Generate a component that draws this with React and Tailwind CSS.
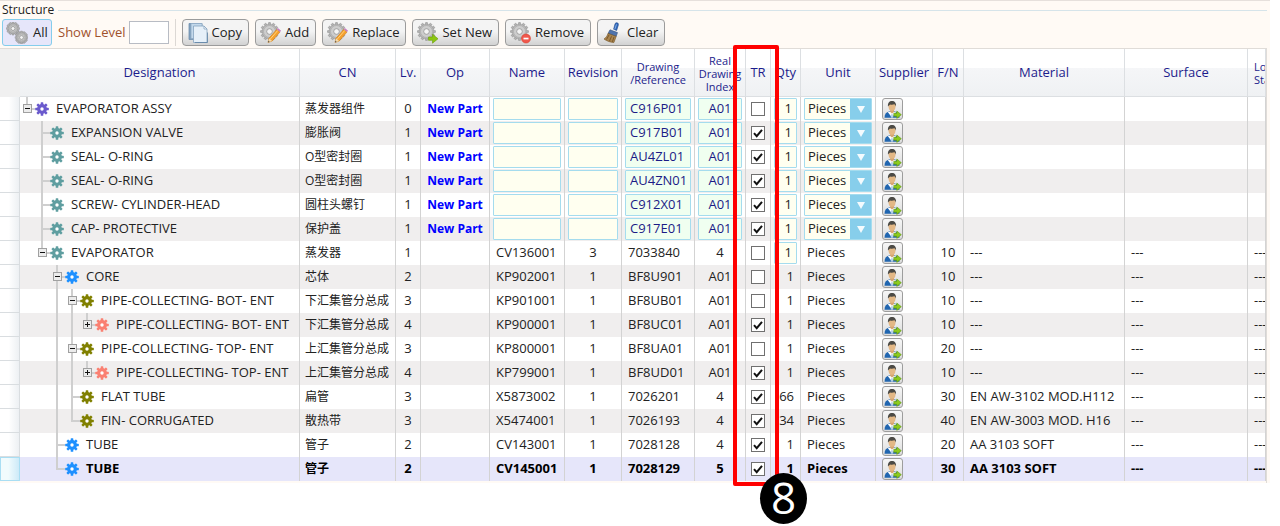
import React from "react";

const GEAR_COLORS = {
  purple: "#6a5acd",
  teal: "#5f9ea0",
  blue: "#1e90ff",
  olive: "#808000",
  salmon: "#fa8072",
};

// guides: one character per tree slot
//   " " empty, "|" line passes through, "T" branch with next sibling, "L" last branch
const ROWS = [
  { guides: "L", toggle: "-", gear: "purple", name: "EVAPORATOR ASSY", cn: "蒸发器组件", lv: 0, isNew: true, drawing: "C916P01", index: "A01", tr: false, qty: "1" },
  { guides: " T", gear: "teal", name: "EXPANSION VALVE", cn: "膨胀阀", lv: 1, isNew: true, drawing: "C917B01", index: "A01", tr: true, qty: "1" },
  { guides: " T", gear: "teal", name: "SEAL- O-RING", cn: "O型密封圈", lv: 1, isNew: true, drawing: "AU4ZL01", index: "A01", tr: true, qty: "1" },
  { guides: " T", gear: "teal", name: "SEAL- O-RING", cn: "O型密封圈", lv: 1, isNew: true, drawing: "AU4ZN01", index: "A01", tr: true, qty: "1" },
  { guides: " T", gear: "teal", name: "SCREW- CYLINDER-HEAD", cn: "圆柱头螺钉", lv: 1, isNew: true, drawing: "C912X01", index: "A01", tr: true, qty: "1" },
  { guides: " T", gear: "teal", name: "CAP- PROTECTIVE", cn: "保护盖", lv: 1, isNew: true, drawing: "C917E01", index: "A01", tr: true, qty: "1" },
  { guides: " L", toggle: "-", gear: "teal", name: "EVAPORATOR", cn: "蒸发器", lv: 1, part: "CV136001", rev: "3", drawing: "7033840", index: "4", tr: false, qty: "1", qtyEdit: true, fn: "10", material: "---", surface: "---" },
  { guides: "  T", toggle: "-", gear: "blue", name: "CORE", cn: "芯体", lv: 2, part: "KP902001", rev: "1", drawing: "BF8U901", index: "A01", tr: false, qty: "1", fn: "10", material: "---", surface: "---" },
  { guides: "  |T", toggle: "-", gear: "olive", name: "PIPE-COLLECTING- BOT- ENT", cn: "下汇集管分总成", lv: 3, part: "KP901001", rev: "1", drawing: "BF8UB01", index: "A01", tr: false, qty: "1", fn: "10", material: "---", surface: "---" },
  { guides: "  ||L", toggle: "+", gear: "salmon", name: "PIPE-COLLECTING- BOT- ENT", cn: "下汇集管分总成", lv: 4, part: "KP900001", rev: "1", drawing: "BF8UC01", index: "A01", tr: true, qty: "1", fn: "10", material: "---", surface: "---" },
  { guides: "  |T", toggle: "-", gear: "olive", name: "PIPE-COLLECTING- TOP- ENT", cn: "上汇集管分总成", lv: 3, part: "KP800001", rev: "1", drawing: "BF8UA01", index: "A01", tr: false, qty: "1", fn: "20", material: "---", surface: "---" },
  { guides: "  ||L", toggle: "+", gear: "salmon", name: "PIPE-COLLECTING- TOP- ENT", cn: "上汇集管分总成", lv: 4, part: "KP799001", rev: "1", drawing: "BF8UD01", index: "A01", tr: true, qty: "1", fn: "10", material: "---", surface: "---" },
  { guides: "  |T", gear: "olive", name: "FLAT TUBE", cn: "扁管", lv: 3, part: "X5873002", rev: "1", drawing: "7026201", index: "4", tr: true, qty: "66", fn: "30", material: "EN AW-3102 MOD.H112", surface: "---" },
  { guides: "  |L", gear: "olive", name: "FIN- CORRUGATED", cn: "散热带", lv: 3, part: "X5474001", rev: "1", drawing: "7026193", index: "4", tr: true, qty: "34", fn: "40", material: "EN AW-3003 MOD. H16", surface: "---" },
  { guides: "  T", gear: "blue", name: "TUBE", cn: "管子", lv: 2, part: "CV143001", rev: "1", drawing: "7028128", index: "4", tr: true, qty: "1", fn: "20", material: "AA 3103 SOFT", surface: "---" },
  { guides: "  L", gear: "blue", name: "TUBE", cn: "管子", lv: 2, part: "CV145001", rev: "1", drawing: "7028129", index: "5", tr: true, qty: "1", fn: "30", material: "AA 3103 SOFT", surface: "---", selected: true },
];

function Gear({ color }) {
  return (
    <svg width="14" height="14" viewBox="0 0 14 14" className="shrink-0" aria-hidden="true">
      {[0, 45, 90, 135].map((a) => (
        <rect key={a} x="5.7" y="0.2" width="2.6" height="13.6" rx="0.6" fill={color} transform={`rotate(${a} 7 7)`} />
      ))}
      <circle cx="7" cy="7" r="4.9" fill={color} />
      <circle cx="7" cy="7" r="1.7" fill="#fff" />
    </svg>
  );
}

function Teeth({ cx, cy, r, hub }) {
  const angles = [0, 30, 60, 90, 120, 150];
  return (
    <g>
      {angles.map((a) => (
        <rect key={a} x={cx - 1.1} y={cy - r} width="2.2" height={r * 2} rx="0.5" fill="#b4b4b4" stroke="#8a8a8a" strokeWidth="0.5" transform={`rotate(${a} ${cx} ${cy})`} />
      ))}
      <circle cx={cx} cy={cy} r={r - 1.7} fill="#bdbdbd" stroke="#969696" strokeWidth="0.5" />
      <circle cx={cx} cy={cy} r={r - 3} fill="#cdcdcd" stroke="#a6a6a6" strokeWidth="0.6" />
      <circle cx={cx} cy={cy} r={hub} fill="#f4f4f4" stroke="#8a8a8a" strokeWidth="0.7" />
    </g>
  );
}

function ToolIcon({ kind }) {
  return (
    <svg width="22" height="22" viewBox="0 0 22 22" className="shrink-0" aria-hidden="true">
      {kind === "all" && (
        <g>
          <Teeth cx={7} cy={6.5} r={6.5} hub={2} />
          <Teeth cx={15.5} cy={15.5} r={6.4} hub={1.9} />
        </g>
      )}
      {kind === "copy" && (
        <g strokeWidth="0.8">
          <path d="M2 1.5h13v16H2z" fill="#7f9fbd" stroke="#6f8fae" />
          <path d="M4 1.5h11v15H4z" fill="#c3d9ec" stroke="#8fabc5" />
          <path d="M6.5 4H17l3 3v13.500H6.500z" fill="#e6f0f9" stroke="#86a3bf" />
          <path d="M17 4v3h3z" fill="#fff" stroke="#86a3bf" />
          <path d="M8 20.500h12.500v-10" fill="none" stroke="#5f83a5" />
        </g>
      )}
      {(kind === "pencil" || kind === "arrow" || kind === "minus") && <Teeth cx={9.5} cy={9.5} r={9} hub={2.8} />}
      {kind === "pencil" && (
        <g>
          <path d="M8 20.500l1-4.200 7.800-9 3.200 2.700-7.800 9z" fill="#f6a12d" stroke="#c97a17" strokeWidth="0.6" />
          <path d="M10.200 17.200l7.600-8.800" stroke="#ffd27a" strokeWidth="1" />
          <path d="M16.800 7.300l1.100-1.200 3.200 2.700-1.100 1.200z" fill="#c77fc0" />
          <path d="M8 20.500l1-4.200 3.200 2.700z" fill="#f3d9ac" />
          <path d="M8 20.500l.4-1.700 1.300 1z" fill="#444" />
        </g>
      )}
      {kind === "arrow" && <path d="M11.500 15h4v-2.800l5.500 4.600-5.500 4.400v-2.900h-4z" fill="#8cc611" stroke="#6a9c0a" strokeWidth="0.6" />}
      {kind === "minus" && (
        <g>
          <circle cx="16" cy="16.500" r="4.500" fill="#f0584c" stroke="#d8402f" strokeWidth="0.6" />
          <rect x="13.500" y="15.700" width="5" height="1.700" fill="#fff" />
        </g>
      )}
      {kind === "brush" && (
        <g>
          <path d="M15 .8c1.300.2 1.600 1.300 1.300 2.400l-1.700 5.300-3-1.300L13 2c.4-1 1-1.400 2-1.200z" fill="#2f68ba" stroke="#1c468a" strokeWidth="0.6" />
          <path d="M14.500 2.300l-1.700 5" stroke="#89b3ec" strokeWidth="0.900" />
          <path d="M8 7.800l7.500 2.800-1.300 3.800-8.200-3z" fill="#4f74ad" stroke="#3d567e" strokeWidth="0.600" />
          <path d="M6 11.400l8.200 3-2.300 6.100c-3.300-.2-7-1.300-9.900-3.500 2-1.200 3.200-3 4-5.600z" fill="#a9854f" stroke="#74501f" strokeWidth="0.600" />
          <path d="M7 13l-2.500 4.500M9.500 14.300l-2 4.800M12 15l-1.600 4.800" stroke="#65441a" strokeWidth="0.700" />
        </g>
      )}
    </svg>
  );
}

function ToolButton({ kind, children }) {
  return (
    <button type="button" className="flex h-[27px] items-center gap-[3px] whitespace-nowrap rounded-[4px] border border-[#9b9b9b] bg-linear-to-b from-[#f4f4f4] from-45% to-[#d2d2d2] pl-1 pr-[6px] leading-none text-[#222]">
      <ToolIcon kind={kind} />
      {children}
    </button>
  );
}

function Slot({ type, toggle }) {
  const line = "#cfcfcf";
  return (
    <svg width="15" height="24" viewBox="0 0 15 24" className="shrink-0" aria-hidden="true">
      {(type === "|" || type === "T") && <rect x="6" y="0" width="2" height="24" fill={line} />}
      {type === "L" && <rect x="6" y="0" width="2" height="13" fill={line} />}
      {(type === "T" || type === "L") && <rect x="7" y="11" width="8" height="2" fill={line} />}
      {toggle && (
        <g>
          <rect x="3.500" y="7.500" width="8" height="8" fill="#ececec" stroke="#a0a0a0" />
          <rect x="5" y="11" width="5" height="1" fill="#111" />
          {toggle === "+" && <rect x="7" y="9" width="1" height="5" fill="#111" />}
        </g>
      )}
    </svg>
  );
}

function Person() {
  return (
    <svg width="19" height="19" viewBox="0 0 19 19" aria-hidden="true">
      <path d="M1.500 17.800c0-3.800 1.800-5.700 4.700-6.200h5.600c3.200.5 4.700 2.400 4.700 6.200z" fill="#2166b0" />
      <path d="M4.800 12l4.200 5.800 4.200-5.800z" fill="#fff" />
      <path d="M8.500 13.800l-.9 3.200 1.400.8 1.400-.8-.9-3.200z" fill="#b5cfe8" />
      <path d="M7.200 9h3.800v3L9 13.600 7.200 12z" fill="#d7a56f" />
      <ellipse cx="9" cy="6.500" rx="3.500" ry="4.200" fill="#e3b886" />
      <path d="M5 6.600C4.500 2.900 6.300 1 9 1s4.500 1.900 4 5.600c-.5-1.300-1-2-1.700-2.300-1.400.6-3.200.6-4.200.1-.8.500-1.600 1.200-2.100 2.200z" fill="#4b4a45" />
      <path d="M10.800 13.200h3V11l4.500 3.700-4.500 3.700v-2.200h-3z" fill="#8ccb1c" stroke="#5d9410" strokeWidth="0.600" />
    </svg>
  );
}

const BOX = "block h-[22px] w-full min-w-0 rounded-[1px] border border-[#a5dcee] text-[13px] outline-none";

function Row({ row, n }) {
  const bg = row.selected ? "bg-[#e6e6fa] font-bold text-black" : n % 2 ? "bg-[#f0eeee]" : "bg-white";
  const td = "h-6 overflow-hidden whitespace-nowrap border-r border-[#d3d3d3] p-0";
  return (
    <tr className={bg}>
      <td className={row.selected
        ? "h-6 border border-[#a9def3] bg-linear-to-r from-[#f1fbfd] from-40% to-[#cdeaf8] p-0"
        : "h-6 border-b border-r border-[#d9dde0] bg-linear-to-r from-white from-45% to-[#edf0f3] p-0"} />
      <td className={td}>
        <div className="flex h-6 items-center">
          {row.guides.split("").map((g, i) => (
            <Slot key={i} type={g} toggle={i === row.guides.length - 1 ? row.toggle : undefined} />
          ))}
          <Gear color={GEAR_COLORS[row.gear]} />
          <span className="pl-[7px]">{row.name}</span>
        </div>
      </td>
      <td className={`${td} pl-[5px] text-[12px]`}>{row.cn}</td>
      <td className={`${td} text-center`}>{row.lv}</td>
      <td className={`${td} text-center text-[12px] font-bold text-[#0000ff]`}>{row.isNew ? "New Part" : ""}</td>
      <td className={`${td} ${row.isNew ? "px-[3px]" : "pl-[6px]"}`}>
        {row.isNew ? <input aria-label="Name" className={`${BOX} bg-[#fffff0]`} /> : row.part}
      </td>
      <td className={`${td} text-center ${row.isNew ? "px-[3px]" : ""}`}>
        {row.isNew ? <input aria-label="Revision" className={`${BOX} bg-[#fffff0]`} /> : row.rev}
      </td>
      <td className={`${td} ${row.isNew ? "px-[3px]" : "pl-[6px]"}`}>
        {row.isNew ? <input aria-label="Drawing reference" defaultValue={row.drawing} className={`${BOX} bg-[#f0fff0] pb-[2px] pl-1 text-[#1b1b86]`} /> : row.drawing}
      </td>
      <td className={`${td} text-center ${row.isNew ? "px-[3px]" : ""}`}>
        {row.isNew ? <input aria-label="Real drawing index" defaultValue={row.index} className={`${BOX} bg-[#f0fff0] pb-[2px] text-center text-[#1b1b86]`} /> : row.index}
      </td>
      <td className={td}>
        <div className="grid place-items-center">
          <input type="checkbox" aria-label="TR" defaultChecked={row.tr} className="peer col-start-1 row-start-1 size-[14px] appearance-none border border-[#707070] bg-white" />
          <svg width="14" height="14" viewBox="0 0 14 14" className="pointer-events-none invisible col-start-1 row-start-1 peer-checked:visible" aria-hidden="true">
            <path d="M3 7.200l2.700 3L11 3.800" fill="none" stroke="#111" strokeWidth="2" />
          </svg>
        </div>
      </td>
      <td className={`${td} text-right ${row.isNew || row.qtyEdit ? "px-[3px]" : "pr-[6px]"}`}>
        {row.isNew || row.qtyEdit ? <input aria-label="Quantity" defaultValue={row.qty} className={`${BOX} bg-[#fffff0] pb-[2px] pr-1 text-right`} /> : row.qty}
      </td>
      <td className={`${td} ${row.isNew ? "px-[3px]" : "pl-[6px]"}`}>
        {row.isNew ? (
          <div className="grid grid-cols-[1fr_22px] items-center">
            <select aria-label="Unit" className={`${BOX} col-span-2 col-start-1 row-start-1 appearance-none bg-[linear-gradient(to_left,#87ceeb_21px,#fffff0_21px)] pl-[3px]`}>
              <option>Pieces</option>
            </select>
            <svg width="22" height="22" viewBox="0 0 22 22" className="pointer-events-none col-start-2 row-start-1" aria-hidden="true">
              <path d="M7 8h8l-4 7z" fill="#f4fbfe" />
            </svg>
          </div>
        ) : "Pieces"}
      </td>
      <td className={`${td} pl-[6px]`}>
        <button type="button" aria-label="Supplier" className="grid h-[22px] w-[21px] place-items-center rounded-[3px] border border-[#9d9d9d] bg-linear-to-b from-[#f7f7f7] to-[#dcdcdc]">
          <Person />
        </button>
      </td>
      <td className={`${td} text-center`}>{row.fn}</td>
      <td className={`${td} pl-[6px]`}>{row.material}</td>
      <td className={`${td} pl-[6px]`}>{row.surface}</td>
      <td className={`${td} pl-[6px]`}>{row.surface}</td>
    </tr>
  );
}

const HEADS = ["Designation", "CN", "Lv.", "Op", "Name", "Revision"];

export default function App() {
  const th = "overflow-hidden whitespace-nowrap border-b border-r border-[#dcdfe2] bg-[linear-gradient(#fff_40%,#f5f6f8_40%,#eff1f3)] p-0 pt-px text-center font-normal";
  const small = `${th} text-[11px] leading-[13px]`;
  return (
    <div className="min-h-screen bg-white font-['Open_Sans','Noto_Sans_CJK_SC',sans-serif] text-[13px] text-[#222]">
      <main className="relative mr-[10px] min-w-[1240px] border-t border-[#e6e0dc] bg-[#fffaf5] pr-[3px]">
        <div className="flex h-[18px] items-center gap-1 pl-[2px] text-[12px] leading-[18px]">
          <h1>Structure</h1>
          <span className="h-px flex-1 bg-[#d6e4ea]" />
        </div>
        <div className="flex h-[29px] items-start gap-[6px] pl-[2px]">
          <button type="button" className="flex h-[27px] w-[50px] items-center gap-[5px] rounded-[3px] border border-[#84cdec] bg-[#e6e6fa] pl-[3px]">
            <ToolIcon kind="all" />
            All
          </button>
          <label className="flex h-[27px] items-center gap-[3px] whitespace-nowrap text-[#a0522d]">
            Show Level
            <input className="h-[23px] w-10 border border-[#b8bcc4] bg-white px-1 outline-none" />
          </label>
          <span className="h-[27px] w-px bg-[#dcd8d4]" />
          <ToolButton kind="copy">Copy</ToolButton>
          <ToolButton kind="pencil">Add</ToolButton>
          <ToolButton kind="pencil">Replace</ToolButton>
          <ToolButton kind="arrow">Set New</ToolButton>
          <ToolButton kind="minus">Remove</ToolButton>
          <ToolButton kind="brush">Clear</ToolButton>
        </div>
        <div className="border-r border-t border-[#e0dcd8] pb-[2px]">
          <table className="w-full table-fixed border-separate border-spacing-0">
            <colgroup>
              <col className="w-[20px]" />
              <col className="w-[280px]" />
              <col className="w-[96px]" />
              <col className="w-[25px]" />
              <col className="w-[69px]" />
              <col className="w-[75px]" />
              <col className="w-[57px]" />
              <col className="w-[73px]" />
              <col className="w-[51px]" />
              <col className="w-[25px]" />
              <col className="w-[30px]" />
              <col className="w-[75px]" />
              <col className="w-[57px]" />
              <col className="w-[31px]" />
              <col className="w-[161px]" />
              <col />
              <col className="w-[18px]" />
            </colgroup>
            <thead>
              <tr className="h-12 text-[#1c1c8c]">
                <td className="bg-[#f0f0f0] p-0" />
                {HEADS.map((h) => <th key={h} className={th}>{h}</th>)}
                <th className={small}>Drawing<br />/Reference</th>
                <th className={small}>Real<br />Drawing<br />Index</th>
                <th className={th}>TR</th>
                <th className={th}>Qty</th>
                <th className={th}>Unit</th>
                <th className={th}>Supplier</th>
                <th className={th}>F/N</th>
                <th className={th}>Material</th>
                <th className={th}>Surface</th>
                <th className={`${small} pl-[6px] text-left`}>Logistic<br />Status</th>
              </tr>
            </thead>
            <tbody>
              {ROWS.map((row, i) => <Row key={i} row={row} n={i} />)}
            </tbody>
          </table>
        </div>
        <div className="pointer-events-none absolute -bottom-[3px] left-[733px] top-11 w-[46px] rounded-[2px] border-4 border-[#ff0000]" />
        <div className="absolute -bottom-[41px] left-[760px] grid h-[51px] w-[47px] place-items-center rounded-[50%] bg-black pb-1 font-['Open_Sans',sans-serif] text-[44px] leading-none text-white">8</div>
      </main>
    </div>
  );
}
